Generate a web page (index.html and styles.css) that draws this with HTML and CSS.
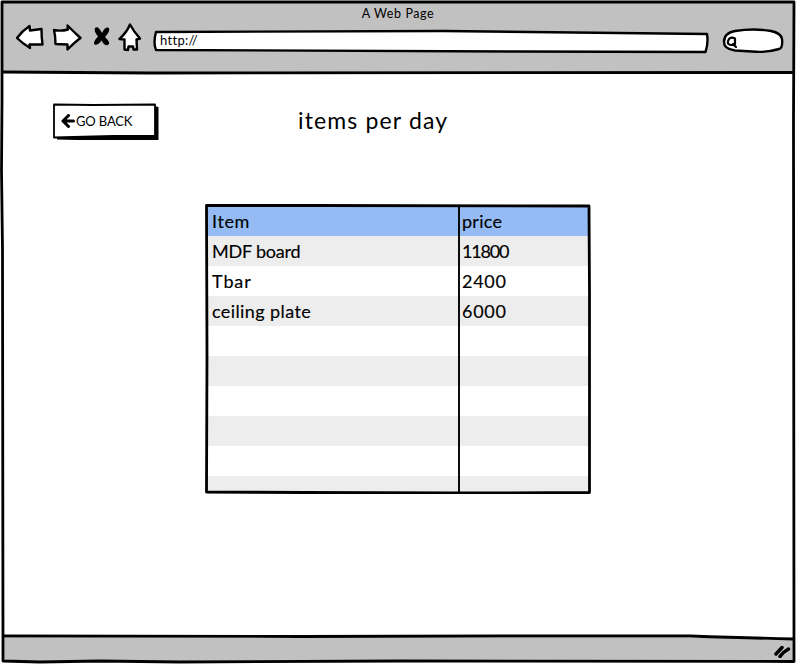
FILE: index.html
```
<!DOCTYPE html>
<html lang="en">
<head>
<meta charset="utf-8">
<title>A Web Page</title>
<link rel="stylesheet" href="styles.css">
</head>
<body>
<div class="window">
  <header class="chrome">
    <div class="title"><span>A Web Page</span></div>
    <div class="toolbar">
      <svg class="nav" width="126" height="32" viewBox="0 0 126 32" aria-hidden="true">
        <path class="shape" d="M1 17Q6 10 13.500 5L14 9.500L25.500 8Q25.500 17 26.500 23.500L13.500 23.500L14 27Q6 22 1 17Z"/>
        <path class="shape" d="M38 9Q45 10.500 52 8.500L51.500 4.500Q58 11 64.500 17Q59 21 51.500 28.500V23.500L39.500 23Q39.500 15 38 9Z"/>
        <path class="cross" d="M79 7Q82 4 86 12Q89.500 5 93 7Q94.500 10 89 16Q95 22 92.500 23.500Q89 26 85.500 19.500Q81.500 25 78.500 23.500Q76.500 21 82 15.500Q77.500 10 79 7Z"/>
        <path class="shape" d="M114 3.500Q118 11 124 17.500L120.500 18.500L121 28.500H117.500L117 25.500H112.500L112 29L108.500 28.500L108.500 18.500L103.500 18Q111 11 114 3.500Z"/>
      </svg>
      <div class="address">
        <svg class="outline" width="556" height="24" viewBox="0 0 556 24" aria-hidden="true"><path class="shape" d="M3 3L290 2Q430 4 554 5Q555.500 14 552.500 23L360 22.500L3 21Q0 14 3 3Z"/></svg>
        <span class="url">http://</span>
      </div>
      <svg class="search" width="62" height="26" viewBox="0 0 62 26" aria-hidden="true">
        <path class="shape" d="M13 3Q32 0 49 3Q59 5 60 11Q61 20 57 21Q44 25 30 23.500L13 22.500Q2 21 2 14Q2 5 13 3Z"/>
        <path class="lens" d="M7 11Q9 8.500 13 10.500V16Q9 18 6.500 16Q5 14 7 11ZM11 16L14 19"/>
      </svg>
    </div>
  </header>
  <main class="content">
    <div class="heading">
      <button class="back">
        <svg class="outline" width="108" height="38" viewBox="0 0 108 38" aria-hidden="true">
          <path d="M4 33H101V3L105.500 4V37H24L4 36.500Z"/>
          <path class="face" d="M1 1.500L40 2L102 1.500V33L60 33L1 34.500Z"/>
        </svg>
        <svg class="arrow" width="14" height="14" viewBox="0 0 14 14" aria-hidden="true"><path d="M7.500 1.500L2 7L7.500 12.500M2.500 7H12.500"/></svg>
        <span>GO BACK</span>
      </button>
      <h1>items per day</h1>
    </div>
    <div class="grid">
      <table>
        <thead><tr><th><span class="item">Item</span></th><th>price</th></tr></thead>
        <tbody>
          <tr><td><span class="board">MDF board</span></td><td><span class="ones">11800</span></td></tr>
          <tr><td><span class="tbar">Tbar</span></td><td><span class="amount">2400</span></td></tr>
          <tr><td><span class="plate">ceiling plate</span></td><td><span class="amount">6000</span></td></tr>
          <tr><td></td><td></td></tr>
          <tr><td></td><td></td></tr>
          <tr><td></td><td></td></tr>
          <tr><td></td><td></td></tr>
          <tr><td></td><td></td></tr>
          <tr><td></td><td></td></tr>
        </tbody>
      </table>
      <svg class="outline" width="386" height="290" viewBox="0 0 386 290" aria-hidden="true">
        <path class="line" d="M1.500 1.500L110 1.500L384 2L384.500 90V288.500L250 289L100 288.500L1.500 288L2 150Z"/>
        <path class="rule" d="M254 2L254 150L254 288"/>
      </svg>
    </div>
  </main>
  <footer class="status">
    <svg width="18" height="14" viewBox="0 0 18 14" aria-hidden="true"><path class="grip" d="M3 10L9 3.500M7 12.500Q10 8 15.500 5"/></svg>
  </footer>
  <svg class="frame" width="796" height="664" viewBox="0 0 796 664" aria-hidden="true">
    <path class="line" d="M2 2H794L793.500 120L794 661.500L400 661L180 662L100 661L40 662L3 661L2.500 250L1.500 170L2 100Z"/>
    <path class="line" d="M3 72L150 73L794 72.500M3 636L300 636.500L500 636L690 636Q750 638 794 639"/>
  </svg>
</div>
</body>
</html>
```
FILE: styles.css
```
* { box-sizing: border-box; }
body { margin: 0; background: #fff; color: #000; font-family: Lato, "Open Sans", sans-serif; }
.window { position: relative; width: 796px; height: 664px; display: grid; grid-template-rows: 73px 1fr 26px; overflow: hidden; }
.chrome { margin: 2px 2px 0; background: #c1c1c1; }
.title { height: 22px; padding-top: 3px; text-align: center; font-size: 12.5px; line-height: 17px; letter-spacing: .6px; }
.toolbar { display: flex; align-items: flex-start; padding-left: 14px; }
.nav { margin-top: -3px; }
.shape { fill: #fff; stroke: #000; stroke-width: 2.4; stroke-linejoin: round; }
.cross { fill: #000; }
.lens { fill: none; stroke: #000; stroke-width: 2.2; stroke-linecap: round; stroke-linejoin: round; }
.address { position: relative; width: 556px; height: 24px; margin: 5px 0 0 11px; padding-left: 7px; font-size: 13px; line-height: 22px; letter-spacing: .3px; }
.url { position: relative; }
.outline { position: absolute; top: 0; left: 0; overflow: visible; }
.search { margin: 4px 0 0 13px; overflow: visible; }
.content { padding: 30px 0 0 53px; }
.heading { display: flex; align-items: flex-start; }
.back { position: relative; width: 108px; height: 38px; padding: 0 0 2px 8px; border: 0; background: none; color: #000; display: flex; align-items: center; font: 13px/16px Lato, sans-serif; letter-spacing: -.15px; }
.back span, .arrow { position: relative; }
.face { fill: #fff; stroke: #000; stroke-width: 1.8; stroke-linejoin: round; }
.arrow { fill: none; stroke: #000; stroke-width: 3; stroke-linecap: round; stroke-linejoin: round; }
.back span { margin-left: 1px; }
h1 { margin: 1px 0 0 137px; font-size: 23px; font-weight: 400; line-height: 33px; letter-spacing: 1.15px; }
.grid { position: relative; width: 386px; height: 290px; margin: 63px 0 0 152px; padding: 2px 2px 0; overflow: hidden; }
table { width: 382px; border-collapse: collapse; table-layout: fixed; font-size: 18px; letter-spacing: .25px; -webkit-text-stroke: .15px; }
tr { height: 30px; }
th, td { padding: 1px 0; text-align: left; font-weight: 400; line-height: 28px; height: 30px; }
th:first-child, td:first-child { width: 252px; padding-left: 5px; }
th:last-child, td:last-child { padding-left: 3px; }
.item { letter-spacing: .6px; }
.board { letter-spacing: -.2px; }
.tbar { letter-spacing: .9px; }
.plate { letter-spacing: .4px; }
.ones { letter-spacing: -1.2px; }
.amount { letter-spacing: .7px; }
th { background: #94bbf3; }
tbody tr:nth-child(odd) { background: #ededed; }
.line { fill: none; stroke: #000; stroke-width: 2.8; stroke-linejoin: round; }
.rule { fill: none; stroke: #000; stroke-width: 1.9; }
.status { margin: 0 2px 2px; background: #c1c1c1; display: flex; justify-content: flex-end; padding: 6px 3px 0 0; }
.grip { fill: none; stroke: #000; stroke-width: 3.5; stroke-linecap: round; }
.frame { position: absolute; inset: 0; pointer-events: none; }
```
